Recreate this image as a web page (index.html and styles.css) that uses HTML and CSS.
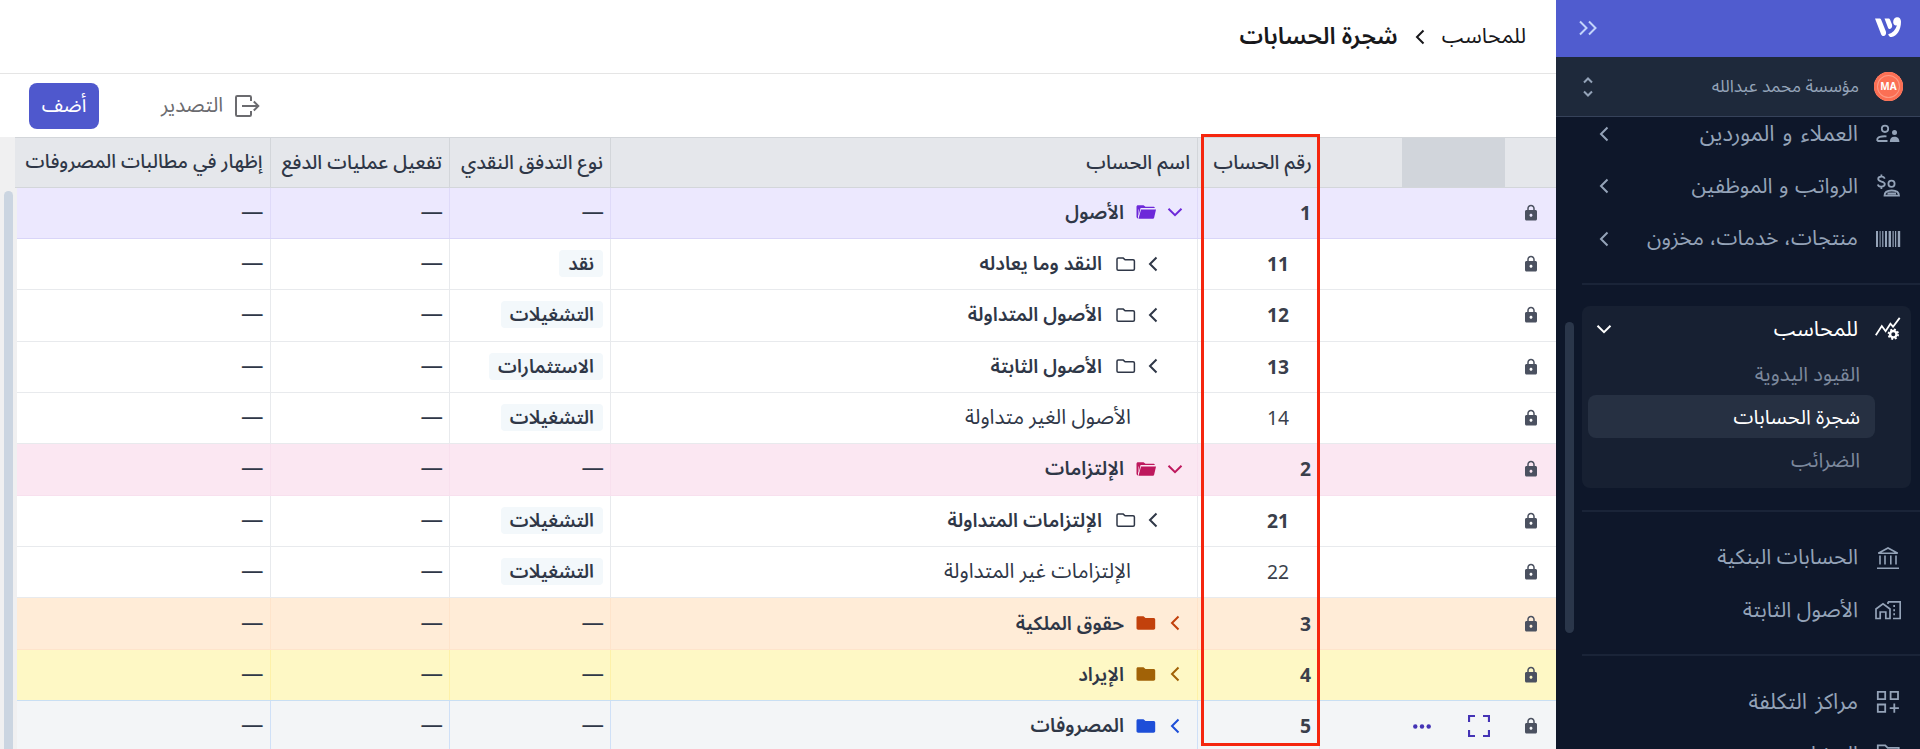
FILE: index.html
```html
<!DOCTYPE html>
<html lang="ar" dir="rtl">
<head>
    <meta charset="UTF-8">
    <meta name="viewport" content="width=device-width, initial-scale=1.0">
    <title>شجرة الحسابات</title>
    <link rel="stylesheet" href="styles.css">
</head>
<body>
    <!-- icons -->
    <svg class="sprite" aria-hidden="true">
        <symbol id="i-left" viewBox="0 0 16 16"><path d="M11.5 1.5 5 8l6.5 6.5" fill="none" stroke="currentColor" stroke-width="2"/></symbol>
        <symbol id="i-down" viewBox="0 0 16 16"><path d="M1.5 4.8 8 11.2l6.500-6.400" fill="none" stroke="currentColor" stroke-width="2"/></symbol>
        <symbol id="i-lock" viewBox="0 0 24 24"><path fill="currentColor" d="M18 8h-1V6c0-2.760-2.240-5-5-5S7 3.240 7 6v2H6c-1.100 0-2 .9-2 2v10c0 1.100.9 2 2 2h12c1.100 0 2-.9 2-2V10c0-1.100-.9-2-2-2zm-6 9c-1.100 0-2-.9-2-2s.9-2 2-2 2 .9 2 2-.9 2-2 2zM9 8V6c0-1.660 1.340-3 3-3s3 1.340 3 3v2H9z"/></symbol>
        <symbol id="i-folder" viewBox="0 0 20 14"><path fill="currentColor" d="M2 .3h5.500l2 1.700H17.500c1 0 1.700.6 1.700 1.500v8.600c0 1-.7 1.700-1.700 1.700H2.200C1.200 13.800.5 13.100.5 12.100V1.800C.5.900 1.100.3 2 .3z"/></symbol>
        <symbol id="i-folder-open" viewBox="0 0 20 14"><path fill="currentColor" d="M2 .3h5.500l2 1.500h7.700c.9 0 1.500.5 1.700 1.300H4.600L2.500 11V4.500H2v8.900c-.9-.1-1.500-.8-1.500-1.600V1.800C.5.900 1.100.3 2 .3z"/><path fill="currentColor" d="M5 4.500h15l-1.800 7.900c-.2.800-.8 1.300-1.600 1.300H2.500z"/></symbol>
        <symbol id="i-folder-line" viewBox="0 0 20 14"><path fill="none" stroke="currentColor" stroke-width="1.500" d="M2.200 1.100h5l1.900 1.700h8c.8 0 1.300.5 1.300 1.200v8c0 .7-.5 1.200-1.300 1.200H2.200c-.7 0-1.200-.5-1.200-1.200V2.300c0-.7.500-1.200 1.200-1.200z"/></symbol>
    </svg>

    <aside class="sidebar">
        <div class="brand">
            <svg class="logo" viewBox="0 0 26 21"><path fill="#fff" d="M0 1.500h4.200c1 0 1.700.5 2.100 1.400l4.500 11.300c.8 2.200-.2 4.700-2.200 4.900-1.200.1-2-.6-2.500-1.800zM9.500 1.500h3.700c1 0 1.600.5 2 1.400l1.700 4.300c.6 1.600.2 3.600-1.500 4.600-1 .6-1.900.2-2.300-.9zM21.700.2C24.300-.2 26 1.600 26 4.700c0 8.300-4.200 14.500-9.500 15.300-1.400.2-2.300-.4-2.900-1.700l-.4-1c4.500-1.600 7.500-4.600 8.800-9.100-1.800.6-3.300-.2-3.700-2.200C17.800 3.300 19.200.6 21.700.2z"/></svg>
            <svg class="collapse" viewBox="0 0 18 16"><path d="m1 1.500 6.500 6.500L1 14.500M10 1.500 16.500 8 10 14.500" fill="none" stroke="currentColor" stroke-width="2"/></svg>
        </div>
        <div class="org">
            <span class="avatar">MA</span>
            <span class="org-name">مؤسسة محمد عبدالله</span>
            <svg class="updown" viewBox="0 0 10 20"><path d="m1 5.500 4-4 4 4M1 14.500l4 4 4-4" fill="none" stroke="currentColor" stroke-width="2"/></svg>
        </div>
        <nav class="menu">
            <div class="menu-item">
                <svg class="icon" viewBox="0 0 26 26"><g fill="none" stroke="currentColor" stroke-width="1.800"><circle cx="10" cy="7.800" r="3.200"/><path d="M2.300 20v-1.600c0-2.100 3.800-3.500 9.200-3.100M2.300 20h10.200"/></g><path fill="currentColor" d="M14.800 20.900c0-3.300 1.700-5.100 4.600-5.100s5 1.800 5 5.100z"/><circle cx="19.500" cy="11.500" r="2.500" fill="currentColor"/></svg>
                <span class="wide">العملاء و الموردين</span>
                <svg class="arrow"><use href="#i-left"/></svg>
            </div>
            <div class="menu-item">
                <svg class="icon" viewBox="0 0 26 26"><g fill="none" stroke="currentColor" stroke-width="1.800"><path d="M9.800 5.600C9.200 4.300 8 3.700 6.400 3.700 4.500 3.700 3.200 4.700 3.200 6.100c0 3.200 6.600 1.700 6.600 5 0 1.500-1.400 2.500-3.400 2.500-1.900 0-3.200-.8-3.600-2.200M6.400 1.500v2.200M6.400 13.600V16"/><circle cx="16.500" cy="10.800" r="3.100"/><path d="M9.500 22.700c0-3.400 2.400-5.200 7.200-5.200s7.300 1.800 7.300 5.200zM12.500 20.500h8.500"/></g></svg>
                <span>الرواتب و الموظفين</span>
                <svg class="arrow"><use href="#i-left"/></svg>
            </div>
            <div class="menu-item">
                <svg class="icon" viewBox="0 0 26 26"><path fill="currentColor" d="M1 5h2v16H1zM4.600 5h1v16h-1zM7.200 5h1.200v16H7.200zM10 5h2v16h-2zM13.600 5h2.400v16h-2.400zM17.500 5h1.200v16h-1.200zM20 5h1.200v16H20zM22.800 5h2.400v16h-2.400z"/></svg>
                <span>منتجات، خدمات، مخزون</span>
                <svg class="arrow"><use href="#i-left"/></svg>
            </div>
            <hr>
            <div class="menu-group">
                <div class="menu-item open">
                    <svg class="icon" viewBox="0 0 26 26"><path d="m.8 19.200 6-9.200 3.800 5.200 4.800-7.500 2.600 3M17.500 11.500l7.200-9.600" fill="none" stroke="currentColor" stroke-width="1.800"/><circle cx="18.300" cy="18.200" r="3.200" fill="none" stroke="currentColor" stroke-width="2.400"/><circle cx="18.300" cy="18.200" r="4.800" fill="none" stroke="currentColor" stroke-width="1.800" stroke-dasharray="2 1.770"/></svg>
                    <span>للمحاسب</span>
                    <svg class="arrow"><use href="#i-down"/></svg>
                </div>
                <div class="sub-item">القيود اليدوية</div>
                <div class="sub-item active">شجرة الحسابات</div>
                <div class="sub-item">الضرائب</div>
            </div>
            <hr>
            <div class="menu-item">
                <svg class="icon" viewBox="0 0 26 26"><path d="M3.300 8.300 13 3l9.700 5.300zM5 10.500v9M10 10.500v9M15.800 10.500v9M21 10.500v9M2 23.200h22" fill="none" stroke="currentColor" stroke-width="1.600"/></svg>
                <span>الحسابات البنكية</span>
            </div>
            <div class="menu-item">
                <svg class="icon" viewBox="0 0 26 26"><g fill="none" stroke="currentColor" stroke-width="1.700"><path d="M1 21.500V12l7-5.300 7 5.300v9.500h-4.200V15H5.200v6.500zM13 4.800h12.200v16.700H18M13 4.800V7"/></g><path fill="currentColor" d="M18.300 8H20v2h-1.700zM18.300 12.200H20v2h-1.700zM18.300 16.300H20v2h-1.700z"/></svg>
                <span>الأصول الثابتة</span>
            </div>
            <hr>
            <div class="menu-item">
                <svg class="icon" viewBox="0 0 26 26"><path d="M2.800 2.800h7.400v7.400H2.800zM15.600 2.800H23v7.400h-7.400zM2.800 15.500h7.400v7.400H2.800zM19.300 14.600v9.200M14.700 19.200h9.200" fill="none" stroke="currentColor" stroke-width="1.800"/></svg>
                <span class="wide">مراكز التكلفة</span>
            </div>
            <div class="menu-item">
                <svg class="icon" viewBox="0 0 26 26"><path d="M2.800 4.300h7.400l2.500 2.500h11v14.500H2.800z" fill="none" stroke="currentColor" stroke-width="1.800"/></svg>
                <span>المشاريع</span>
            </div>
            <div class="menu-scroll"></div>
        </nav>
    </aside>

    <main class="content">
        <header class="breadcrumb">
            <span>للمحاسب</span>
            <svg class="sep"><use href="#i-left"/></svg>
            <h1>شجرة الحسابات</h1>
        </header>
        <div class="toolbar">
            <div class="export">
                <svg viewBox="0 0 25 22"><path d="M16 6V2.300c0-.8-.5-1.300-1.300-1.300H2.300C1.500 1 1 1.500 1 2.300v17.400c0 .8.500 1.300 1.300 1.300h12.400c.8 0 1.300-.5 1.300-1.300V16M7 11h16M18.800 6.500l4.500 4.500-4.500 4.500" fill="none" stroke="currentColor" stroke-width="2"/></svg>
                <span>التصدير</span>
            </div>
            <button class="btn">أضف</button>
        </div>

        <div class="table-wrap">
            <div class="table">
                <div class="row head">
                    <div></div><div class="shade"></div><div></div>
                    <div class="cell">رقم الحساب</div>
                    <div class="cell">اسم الحساب</div>
                    <div class="cell">نوع التدفق النقدي</div>
                    <div class="cell">تفعيل عمليات الدفع</div>
                    <div class="cell last">إظهار في مطالبات المصروفات</div>
                </div>
                <div class="row root violet">
                    <div class="lock"><svg><use href="#i-lock"/></svg></div><div></div><div></div>
                    <div class="cell num">1</div>
                    <div class="cell name"><svg class="toggle"><use href="#i-down"/></svg><svg class="folder"><use href="#i-folder-open"/></svg>الأصول</div>
                    <div class="cell dash">—</div><div class="cell dash">—</div><div class="cell dash">—</div>
                </div>
                <div class="row child">
                    <div class="lock"><svg><use href="#i-lock"/></svg></div><div></div><div></div>
                    <div class="cell num">11</div>
                    <div class="cell name"><svg class="toggle"><use href="#i-left"/></svg><svg class="folder"><use href="#i-folder-line"/></svg>النقد وما يعادله</div>
                    <div class="cell"><span class="tag">نقد</span></div><div class="cell dash">—</div><div class="cell dash">—</div>
                </div>
                <div class="row child">
                    <div class="lock"><svg><use href="#i-lock"/></svg></div><div></div><div></div>
                    <div class="cell num">12</div>
                    <div class="cell name"><svg class="toggle"><use href="#i-left"/></svg><svg class="folder"><use href="#i-folder-line"/></svg>الأصول المتداولة</div>
                    <div class="cell"><span class="tag">التشغيلات</span></div><div class="cell dash">—</div><div class="cell dash">—</div>
                </div>
                <div class="row child">
                    <div class="lock"><svg><use href="#i-lock"/></svg></div><div></div><div></div>
                    <div class="cell num">13</div>
                    <div class="cell name"><svg class="toggle"><use href="#i-left"/></svg><svg class="folder"><use href="#i-folder-line"/></svg>الأصول الثابتة</div>
                    <div class="cell"><span class="tag">الاستثمارات</span></div><div class="cell dash">—</div><div class="cell dash">—</div>
                </div>
                <div class="row child leaf">
                    <div class="lock"><svg><use href="#i-lock"/></svg></div><div></div><div></div>
                    <div class="cell num">14</div>
                    <div class="cell name">الأصول الغير متداولة</div>
                    <div class="cell"><span class="tag">التشغيلات</span></div><div class="cell dash">—</div><div class="cell dash">—</div>
                </div>
                <div class="row root pink">
                    <div class="lock"><svg><use href="#i-lock"/></svg></div><div></div><div></div>
                    <div class="cell num">2</div>
                    <div class="cell name"><svg class="toggle"><use href="#i-down"/></svg><svg class="folder"><use href="#i-folder-open"/></svg>الإلتزامات</div>
                    <div class="cell dash">—</div><div class="cell dash">—</div><div class="cell dash">—</div>
                </div>
                <div class="row child">
                    <div class="lock"><svg><use href="#i-lock"/></svg></div><div></div><div></div>
                    <div class="cell num">21</div>
                    <div class="cell name"><svg class="toggle"><use href="#i-left"/></svg><svg class="folder"><use href="#i-folder-line"/></svg>الإلتزامات المتداولة</div>
                    <div class="cell"><span class="tag">التشغيلات</span></div><div class="cell dash">—</div><div class="cell dash">—</div>
                </div>
                <div class="row child leaf">
                    <div class="lock"><svg><use href="#i-lock"/></svg></div><div></div><div></div>
                    <div class="cell num">22</div>
                    <div class="cell name">الإلتزامات غير المتداولة</div>
                    <div class="cell"><span class="tag">التشغيلات</span></div><div class="cell dash">—</div><div class="cell dash">—</div>
                </div>
                <div class="row root orange">
                    <div class="lock"><svg><use href="#i-lock"/></svg></div><div></div><div></div>
                    <div class="cell num">3</div>
                    <div class="cell name"><svg class="toggle"><use href="#i-left"/></svg><svg class="folder"><use href="#i-folder"/></svg>حقوق الملكية</div>
                    <div class="cell dash">—</div><div class="cell dash">—</div><div class="cell dash">—</div>
                </div>
                <div class="row root yellow">
                    <div class="lock"><svg><use href="#i-lock"/></svg></div><div></div><div></div>
                    <div class="cell num">4</div>
                    <div class="cell name"><svg class="toggle"><use href="#i-left"/></svg><svg class="folder"><use href="#i-folder"/></svg>الإيراد</div>
                    <div class="cell dash">—</div><div class="cell dash">—</div><div class="cell dash">—</div>
                </div>
                <div class="row root blue">
                    <div class="lock"><svg><use href="#i-lock"/></svg></div>
                    <div class="actions">
                        <svg class="expand" viewBox="0 0 22 22"><path d="M1 7V1h6M15 1h6v6M21 15v6h-6M7 21H1v-6" fill="none" stroke="currentColor" stroke-width="2.200"/></svg>
                        <svg class="more" viewBox="0 0 18 5" fill="currentColor"><circle cx="2.300" cy="2.500" r="2.200"/><circle cx="9" cy="2.500" r="2.200"/><circle cx="15.700" cy="2.500" r="2.200"/></svg>
                    </div>
                    <div></div>
                    <div class="cell num">5</div>
                    <div class="cell name"><svg class="toggle"><use href="#i-left"/></svg><svg class="folder"><use href="#i-folder"/></svg>المصروفات</div>
                    <div class="cell dash">—</div><div class="cell dash">—</div><div class="cell dash">—</div>
                </div>
            </div>
            <div class="table-scroll"></div>
            <div class="highlight"></div>
        </div>
    </main>
</body>
</html>
```
FILE: styles.css
```css
* {
    box-sizing: border-box;
}
body {
    margin: 0;
    display: flex;
    height: 749px;
    overflow: hidden;
    background: #fff;
    color: #2f3747;
    font-family: "Noto Sans", "Noto Sans Arabic", "DejaVu Sans", sans-serif;
    font-size: 19.3px;
}
svg {
    display: block;
    flex: none;
}
.sprite {
    position: absolute;
    width: 0;
    height: 0;
}

/* sidebar */
.sidebar {
    display: flex;
    flex-direction: column;
    flex: none;
    width: 364px;
    background: #0e172a;
    color: #94a3b8;
}
.brand {
    display: flex;
    align-items: center;
    justify-content: space-between;
    flex: none;
    height: 57px;
    padding: 0 19px 2px 23px;
    background: #505ccf;
}
.logo {
    width: 26px;
    height: 21px;
}
.collapse {
    width: 18px;
    height: 16px;
    color: #c3d4fb;
}
.org {
    display: flex;
    align-items: center;
    flex: none;
    height: 60px;
    padding: 0 17px 0 27px;
    border-bottom: 1px solid #36425a;
    background: #1e293b;
}
.avatar {
    width: 29px;
    height: 29px;
    border-radius: 50%;
    background: #fb6f54;
    box-shadow: inset 0 0 0 3px #fb6f54, inset 0 0 0 4px #fd9a85;
    color: #fff;
    font-size: 10px;
    font-weight: 700;
    line-height: 29px;
    text-align: center;
}
.org-name {
    flex: 1;
    margin-right: 15px;
    font-size: 17.2px;
}
.updown {
    width: 10px;
    height: 20px;
}
.menu {
    position: relative;
    flex: 1;
    overflow: hidden;
    font-size: 21.2px;
}
.menu-item {
    display: flex;
    align-items: center;
    height: 52.600px;
    padding: 0 19px 0 40px;
}
.menu > .menu-item:first-child {
    margin-top: -9.500px;
}
.menu-item span {
    flex: 1;
    margin-right: 17px;
}
.menu-item:nth-child(2) span {
    word-spacing: 1px;
}
.menu-item .wide {
    font-size: 22px;
    word-spacing: 2.500px;
}
.icon {
    width: 26px;
    height: 26px;
}
.arrow {
    width: 16px;
    height: 16px;
}
.menu hr {
    height: 2px;
    margin: 18px 0 19px 26px;
    border: 0;
    background: #1a2438;
}
.menu-group {
    height: 182px;
    margin: 21px 9px 22px 26px;
    border-radius: 8px;
    background: #172032;
    color: #7c889c;
    font-size: 20.2px;
}
.menu-group .menu-item {
    height: 46px;
    padding: 0 10px 0 14px;
    font-size: 21.4px;
}
.open,
.active {
    color: #fff;
}
.sub-item {
    height: 43px;
    margin: 0 36px 0 6px;
    padding-right: 15px;
    border-radius: 8px;
    line-height: 43px;
}
.active {
    background: #263042;
}
.menu-scroll {
    position: absolute;
    top: 205px;
    left: 9px;
    width: 9px;
    height: 311px;
    border-radius: 5px;
    background: #2a364a;
}

/* content */
.content {
    display: flex;
    flex-direction: column;
    flex: 1;
    min-width: 0;
}
.breadcrumb {
    display: flex;
    align-items: center;
    flex: none;
    height: 74px;
    padding-right: 30px;
    border-bottom: 1px solid #e5e5e5;
    color: #18181b;
    font-size: 21.4px;
}
.breadcrumb .sep {
    width: 16px;
    height: 16px;
    margin: 0 14px;
}
.breadcrumb h1 {
    margin: 0;
    font-size: 23.600px;
    font-weight: 600;
}
.toolbar {
    display: flex;
    align-items: center;
    justify-content: flex-end;
    flex: none;
    height: 63px;
    padding-left: 29px;
    gap: 62px;
}
.export {
    display: flex;
    align-items: center;
    gap: 12px;
    color: #6b6b6f;
    font-size: 20.4px;
}
.export svg {
    width: 25px;
    height: 22px;
}
.btn {
    width: 70px;
    height: 46px;
    padding: 0;
    border: 0;
    border-radius: 8px;
    background: #4f58cd;
    color: #fff;
    font: inherit;
    font-size: 20px;
}

/* accounts table */
.table-wrap {
    position: relative;
    flex: 1;
    min-height: 0;
    background: #f0f0f1;
}
.table {
    height: 100%;
    margin-left: 15px;
    overflow: hidden;
}
.row {
    display: grid;
    grid-template-columns: 51px 103px 82px 122px 587px 161px 179.5px 1fr;
    height: 51.35px;
    margin-left: 2px;
    border-bottom: 1px solid #e8eaed;
    background: #fff;
}
.head {
    height: 50.6px;
    margin-left: 0;
    border-top: 1px solid #d3d6da;
    border-bottom-color: #d3d6da;
    background: #e5e7eb;
    font-size: 19.6px;
    font-weight: 500;
}
.shade {
    background: #d1d5db;
}
.cell {
    display: flex;
    align-items: center;
    padding-right: 7px;
    padding-bottom: 1px;
    border-right: 1px solid #e8eaed;
    white-space: nowrap;
}
.head .cell {
    padding-bottom: 0;
    border-color: #d3d6da;
}
.head .last {
    font-size: 19.2px;
}
.dash {
    padding-right: 6px;
    padding-bottom: 5px;
    font-size: 22.500px;
}
.num {
    padding-right: 8px;
    color: #3a3f4b;
    font-weight: 700;
}
.name {
    padding-right: 14px;
    font-weight: 600;
}
.toggle {
    width: 16px;
    height: 16px;
    margin-left: 11px;
}
.folder {
    width: 20px;
    height: 14px;
    margin-left: 12px;
}
.child .num {
    padding-right: 30px;
}
.child .name {
    padding-right: 36px;
}
.child .toggle {
    margin-left: 9px;
}
.child .folder {
    margin-left: 14px;
}
.leaf .num,
.leaf .name {
    font-weight: 400;
}
.leaf .name {
    padding-right: 66px;
    font-size: 20.600px;
}
.lock {
    display: flex;
    align-items: center;
    padding-right: 16px;
    color: #4b5160;
}
.lock svg {
    width: 18px;
    height: 18px;
}
.actions {
    display: flex;
    align-items: center;
    justify-content: space-between;
    padding: 0 15px 0 11px;
    color: #4433b5;
}
.expand {
    width: 22px;
    height: 22px;
}
.more {
    width: 18px;
    height: 5px;
}
.tag {
    height: 27px;
    padding: 0 9px;
    border-radius: 4px;
    background: #f3f8fb;
    font-size: 18.800px;
    font-weight: 600;
    line-height: 27px;
}
.violet {
    border-color: #d9d5f8;
    background: #ece8fe;
}
.violet .cell {
    border-color: #dfdaf9;
}
.violet .name svg {
    color: #6d28d9;
}
.pink,
.pink .cell {
    border-color: #f8e0ee;
    background: #fbe7f2;
}
.pink .name svg {
    color: #be185d;
}
.orange,
.orange .cell {
    border-color: #fee4cb;
    background: #ffecd7;
}
.orange .name svg {
    color: #c2410c;
}
.yellow,
.yellow .cell {
    border-color: #fdf1a9;
    background: #fef8c5;
}
.yellow {
    border-bottom-color: #c9dff3;
}
.yellow .name svg {
    color: #a16207;
}
.blue,
.blue .cell {
    border-color: #cfe0f7;
    background: #f3f5f7;
}
.blue .name svg {
    color: #1d4ed8;
}
.table-scroll {
    position: absolute;
    top: 54px;
    bottom: 0;
    left: 4px;
    width: 9px;
    border-radius: 5px 5px 0 0;
    background: #cbd5e1;
}
/* red frame round the account number column */
.highlight {
    position: absolute;
    top: -3px;
    left: 1201px;
    width: 119px;
    height: 612px;
    border: 3px solid #f5260e;
}
```
